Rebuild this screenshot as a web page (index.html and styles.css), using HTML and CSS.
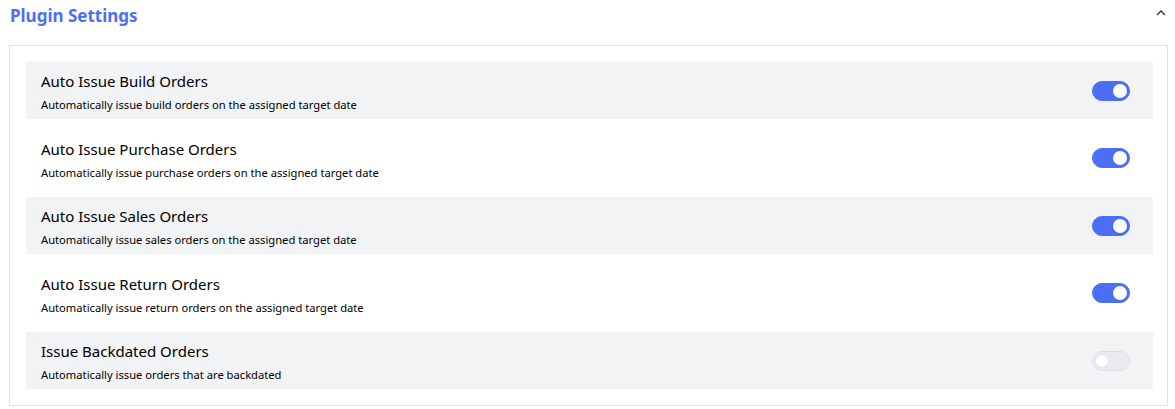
FILE: index.html
```html
<!doctype html>
<html lang="en">
<head>
  <title>Plugin Settings</title>
  <meta charset="utf-8">
  <link rel="stylesheet" href="styles.css">
</head>
<body>

<div class="header">
  <span class="title">Plugin Settings</span>
  <svg class="chevron" width="12" height="12" viewBox="0 0 12 12"><path d="M2 8 L6 4 L10 8" fill="none" stroke="#333" stroke-width="1.4"/></svg>
</div>

<div class="card">
  <div class="row">
    <div class="text">
      <div class="name">Auto Issue Build Orders</div>
      <div class="desc">Automatically issue build orders on the assigned target date</div>
    </div>
    <span class="switch on"></span>
  </div>
  <div class="row">
    <div class="text">
      <div class="name">Auto Issue Purchase Orders</div>
      <div class="desc">Automatically issue purchase orders on the assigned target date</div>
    </div>
    <span class="switch on"></span>
  </div>
  <div class="row">
    <div class="text">
      <div class="name">Auto Issue Sales Orders</div>
      <div class="desc">Automatically issue sales orders on the assigned target date</div>
    </div>
    <span class="switch on"></span>
  </div>
  <div class="row">
    <div class="text">
      <div class="name">Auto Issue Return Orders</div>
      <div class="desc">Automatically issue return orders on the assigned target date</div>
    </div>
    <span class="switch on"></span>
  </div>
  <div class="row">
    <div class="text">
      <div class="name">Issue Backdated Orders</div>
      <div class="desc">Automatically issue orders that are backdated</div>
    </div>
    <span class="switch"></span>
  </div>
</div>

</body>
</html>
```
FILE: styles.css
```css
body {
  margin: 0;
  padding: 0;
  background: #ffffff;
  color: #000000;
  font-family: "Noto Sans", sans-serif;
}

.header {
  display: flex;
  justify-content: space-between;
  align-items: center;
  height: 30px;
  padding: 0 8px 0 10px;
}

.title {
  color: #4c6ef5;
  font-size: 17px;
  font-weight: bold;
}

.chevron {
  margin-top: -4px;
}

.card {
  margin: 15px 7px 0 9px;
  border: 1px solid #dee2e6;
  padding: 16px 14px 16px 16px;
  display: flex;
  flex-direction: column;
  gap: 10.5px;
}

.row {
  display: flex;
  justify-content: space-between;
  align-items: center;
  height: 57px;
  padding: 0 23px 0 15px;
}

.row:nth-child(odd) {
  background: #f1f3f5;
}

.text {
  padding-top: 4px;
}

.name {
  font-size: 15px;
  line-height: 20px;
}

.desc {
  font-size: 11.2px;
  line-height: 18px;
  margin-top: 5px;
}

.switch {
  position: relative;
  width: 38px;
  height: 20px;
  border-radius: 10px;
  background: #e9ecef;
  border: 1px solid #dee2e6;
  box-sizing: border-box;
}

.switch::after {
  content: "";
  position: absolute;
  top: 2px;
  left: 2px;
  width: 14px;
  height: 14px;
  border-radius: 50%;
  background: #ffffff;
  border: 1px solid #dee2e6;
  box-sizing: border-box;
}

.switch.on {
  background: #4c6ef5;
  border-color: #4c6ef5;
}

.switch.on::after {
  left: 20px;
  border: none;
}
```
